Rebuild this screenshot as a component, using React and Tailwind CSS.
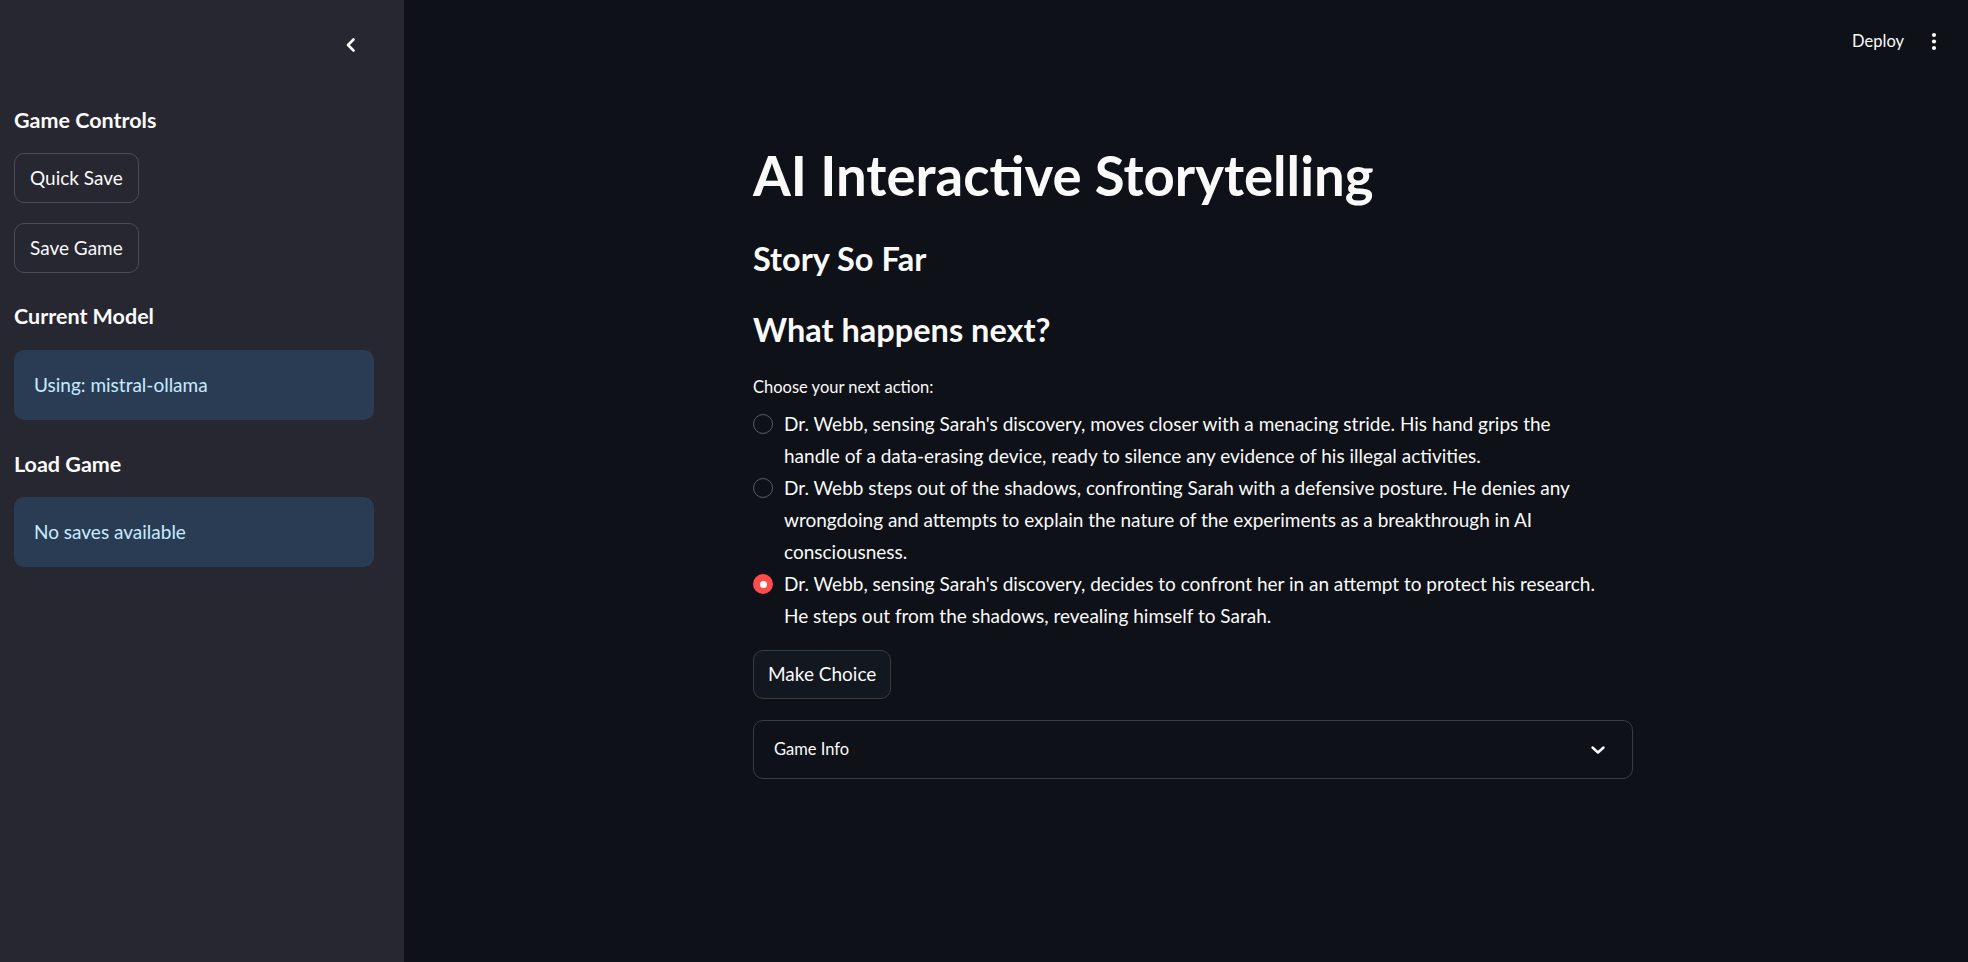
import { useState } from 'react';

const choices = [
    [
        "Dr. Webb, sensing Sarah's discovery, moves closer with a menacing stride. His hand grips the",
        'handle of a data-erasing device, ready to silence any evidence of his illegal activities.',
    ],
    [
        'Dr. Webb steps out of the shadows, confronting Sarah with a defensive posture. He denies any',
        'wrongdoing and attempts to explain the nature of the experiments as a breakthrough in AI',
        'consciousness.',
    ],
    [
        "Dr. Webb, sensing Sarah's discovery, decides to confront her in an attempt to protect his research.",
        'He steps out from the shadows, revealing himself to Sarah.',
    ],
];

function SideButton({ children, className = '' }) {
    return (
        <button className={`h-[50px] px-[15px] rounded-[10px] border border-[#4b4c55] bg-[#262730] text-[19px] text-[#fafafa] ${className}`}>
            {children}
        </button>
    );
}

function InfoBox({ children, className = '' }) {
    return (
        <div className={`w-[360px] h-[70px] rounded-[10px] bg-[#2a3c54] text-[#c7ebff] text-[19px] flex items-center px-5 ${className}`}>
            {children}
        </div>
    );
}

function App() {
    const [selected, setSelected] = useState(2);

    return (
        <div className="flex min-h-screen h-[962px] bg-[#0e1117] text-[#fafafa] font-['Lato',sans-serif] overflow-hidden">
            <aside className="w-[404px] shrink-0 bg-[#262730] pl-[14px] flex flex-col">
                <div className="h-[104px] relative">
                    {/* collapse sidebar */}
                    <svg className="absolute left-[327px] top-[35px]" width="20" height="20" viewBox="0 0 20 20" fill="none" stroke="#fafafa" strokeWidth="2.6" strokeLinecap="round" strokeLinejoin="round">
                        <path d="M12.5 4.5L7 10l5.5 5.5" />
                    </svg>
                </div>
                <h3 className="h-8 leading-8 text-[21.5px] font-bold">Game Controls</h3>
                <SideButton className="mt-[17px] self-start">Quick Save</SideButton>
                <SideButton className="mt-[20px] self-start">Save Game</SideButton>
                <h3 className="mt-[27px] h-8 leading-8 text-[21.5px] font-bold">Current Model</h3>
                <InfoBox className="mt-[18px]">Using: mistral-ollama</InfoBox>
                <h3 className="mt-[28px] h-8 leading-8 text-[21.5px] font-bold">Load Game</h3>
                <InfoBox className="mt-[17px]">No saves available</InfoBox>
            </aside>

            <main className="flex-1 relative">
                <header className="absolute top-0 right-0 h-[82px] flex items-start pt-[29px] pr-[31px] gap-[27px]">
                    <span className="text-[16.5px] leading-6">Deploy</span>
                    <svg className="mt-[1px]" width="6" height="22" viewBox="0 0 6 22" fill="#fafafa">
                        <circle cx="3" cy="5" r="2.1" />
                        <circle cx="3" cy="11.5" r="2.1" />
                        <circle cx="3" cy="18" r="2.1" />
                    </svg>
                </header>

                <div className="ml-[349px] w-[880px] pt-[143px] flex flex-col">
                    <h1 className="h-16 leading-[64px] text-[54.5px] font-bold">AI Interactive Storytelling</h1>
                    <h2 className="mt-[31.5px] h-10 leading-10 text-[32.5px] font-bold">Story So Far</h2>
                    <h2 className="mt-[31px] h-10 leading-10 text-[32.5px] font-bold">What happens next?</h2>
                    <p className="mt-[25.5px] h-6 leading-6 text-[16.5px]">Choose your next action:</p>

                    <div className="mt-[9px] flex flex-col">
                        {choices.map((lines, i) => (
                            <label key={i} className="flex items-start cursor-pointer" onClick={() => setSelected(i)}>
                                <span className="h-8 flex items-center shrink-0">
                                    {selected === i ? (
                                        <span className="w-5 h-5 rounded-full bg-[#ff4b4b] flex items-center justify-center">
                                            <span className="w-[7px] h-[7px] rounded-full bg-white" />
                                        </span>
                                    ) : (
                                        <span className="w-5 h-5 rounded-full border-[1.5px] border-[#595b63]" />
                                    )}
                                </span>
                                <span className="ml-[11px] text-[19px] leading-8 flex flex-col">
                                    {lines.map(l => (
                                        <span key={l} className="whitespace-nowrap">{l}</span>
                                    ))}
                                </span>
                            </label>
                        ))}
                    </div>

                    <button className="mt-[18px] self-start h-[49px] px-[14px] rounded-[10px] border border-[#3a3c44] bg-[#131720] text-[19px]">
                        Make Choice
                    </button>

                    <div className="mt-[21px] h-[59px] rounded-[10px] border border-[#3a3c44] flex items-center justify-between pl-[20px] pr-[26px]">
                        <span className="text-[16.5px]">Game Info</span>
                        <svg width="16" height="16" viewBox="0 0 16 16" fill="none" stroke="#fafafa" strokeWidth="2.4" strokeLinecap="round" strokeLinejoin="round">
                            <path d="M2.5 5.5L8 10.5l5.5-5" />
                        </svg>
                    </div>
                </div>
            </main>
        </div>
    );
}

export default App;
